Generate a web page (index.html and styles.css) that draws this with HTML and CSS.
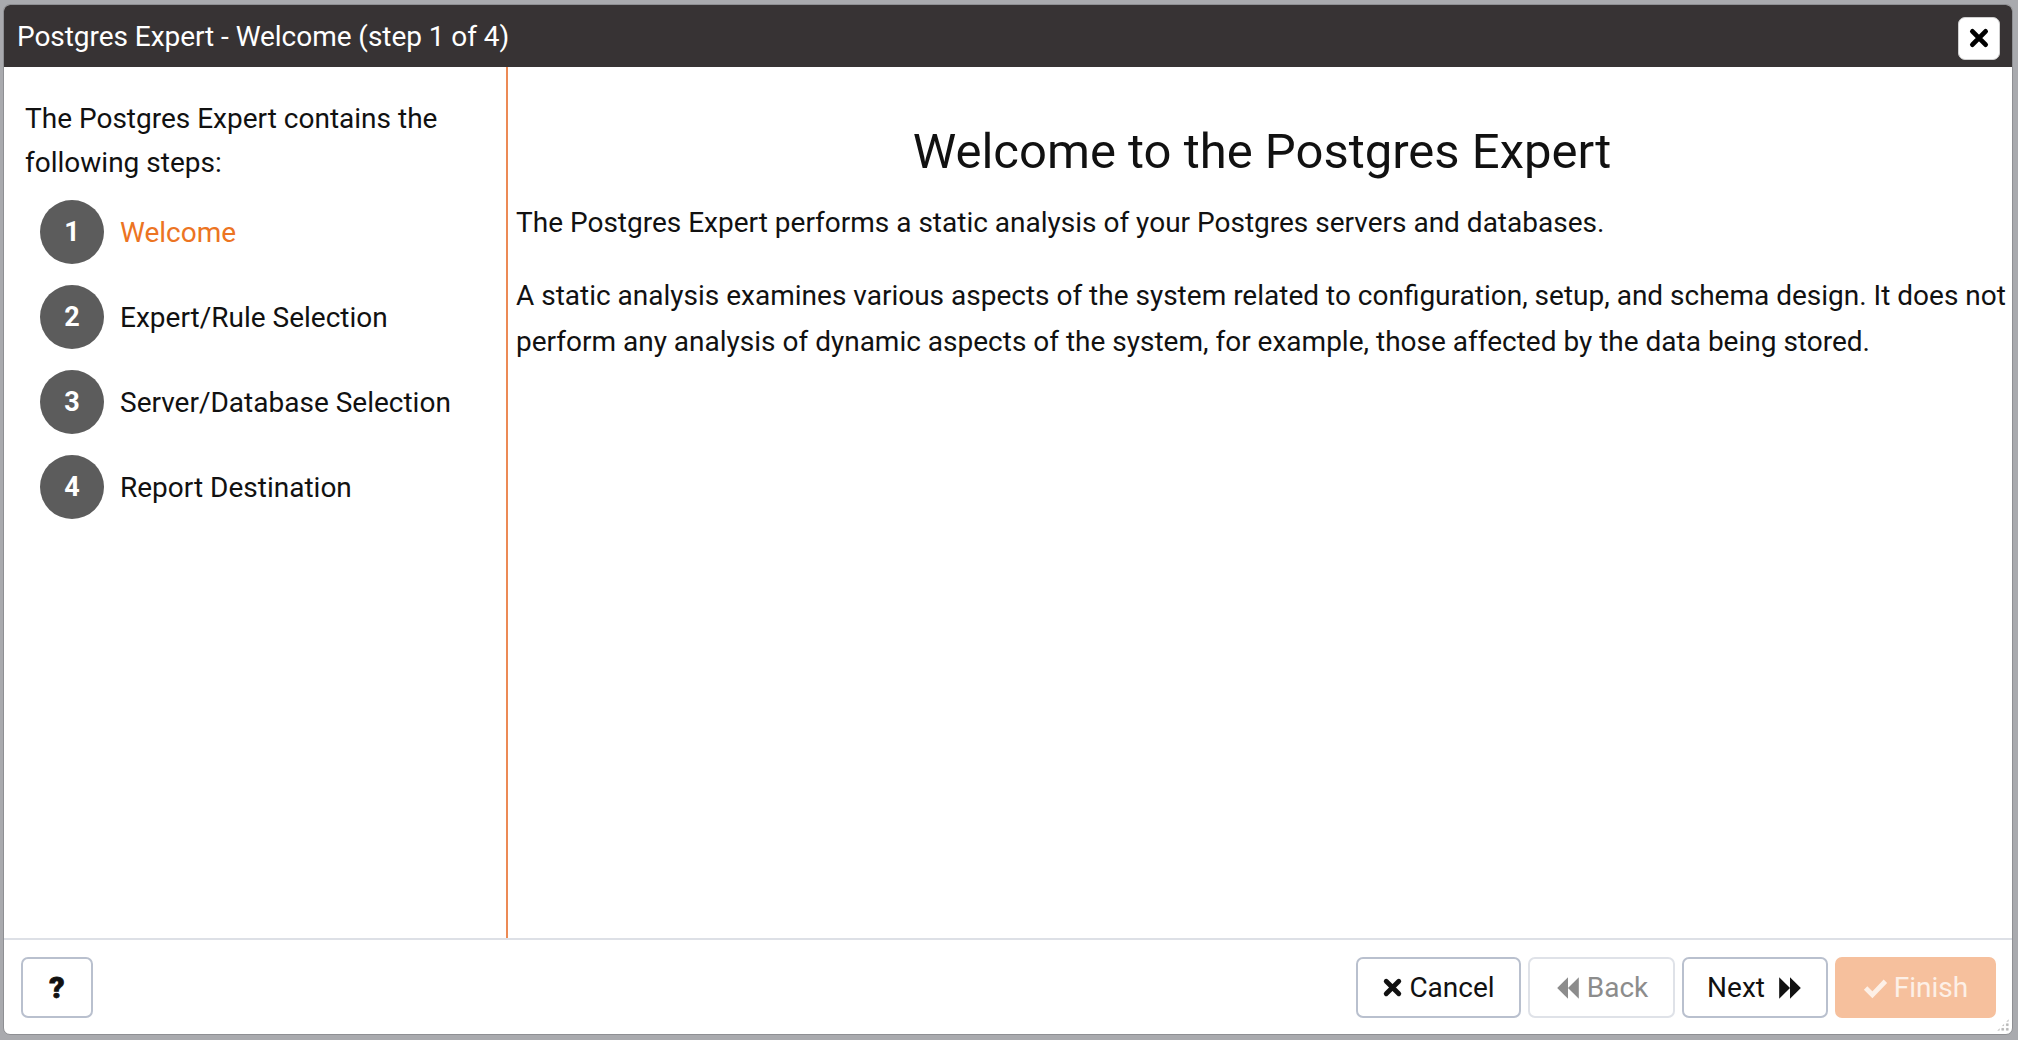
FILE: index.html
```html
<!DOCTYPE html>
<html>
<head>
<meta charset="utf-8">
<link rel="stylesheet" href="styles.css">
</head>
<body>
<div class="dialog">
  <div class="titlebar">
    <div class="title">Postgres Expert - Welcome (step 1 of 4)</div>
    <button class="close" aria-label="Close">
      <svg width="22" height="22" viewBox="0 0 20 20"><path d="M4 4 L16 16 M16 4 L4 16" stroke="#000" stroke-width="4.4" stroke-linecap="round"/></svg>
    </button>
  </div>
  <div class="main">
    <div class="side">
      <p class="intro">The Postgres Expert contains the following steps:</p>
      <ul class="steps">
        <li class="step active"><span class="num">1</span><span class="label">Welcome</span></li>
        <li class="step"><span class="num">2</span><span class="label">Expert/Rule Selection</span></li>
        <li class="step"><span class="num">3</span><span class="label">Server/Database Selection</span></li>
        <li class="step"><span class="num">4</span><span class="label">Report Destination</span></li>
      </ul>
    </div>
    <div class="content">
      <h1>Welcome to the Postgres Expert</h1>
      <p>The Postgres Expert performs a static analysis of your Postgres servers and databases.</p>
      <p>A static analysis examines various aspects of the system related to configuration, setup, and schema design. It does not perform any analysis of dynamic aspects of the system, for example, those affected by the data being stored.</p>
    </div>
  </div>
  <div class="footer">
    <button class="btn help"><span class="q">?</span></button>
    <div class="actions">
      <button class="btn"><svg class="ic" width="21" height="21" viewBox="0 0 20 20"><path d="M4 4 L16 16 M16 4 L4 16" stroke="#111" stroke-width="4.6" stroke-linecap="round"/></svg>Cancel</button>
      <button class="btn disabled"><svg class="ic" width="26" height="26" viewBox="0 0 24 24"><polygon points="12,2 12,22 2,12" fill="#8c8c8c"/><polygon points="22,2 22,22 12,12" fill="#8c8c8c"/></svg>Back</button>
      <button class="btn next">Next<svg class="ic after" width="26" height="26" viewBox="0 0 24 24"><polygon points="2,2 2,22 12,12" fill="#111"/><polygon points="12,2 12,22 22,12" fill="#111"/></svg></button>
      <button class="btn finish"><svg class="ic" width="25" height="23" viewBox="0 0 24 22"><path d="M2.5 11.5 L9 18 L21.5 5" stroke="#fdf0e7" stroke-width="4.6" fill="none" stroke-linejoin="miter"/></svg>Finish</button>
    </div>
    <div class="grip"></div>
  </div>
</div>
</body>
</html>
```

FILE: styles.css
```css
html, body {
  margin: 0;
  padding: 0;
  height: 100%;
}
body {
  background: #a9aaae;
  font-family: Roboto, "Liberation Sans", sans-serif;
  overflow: hidden;
}
.dialog {
  box-sizing: border-box;
  margin: 4px 5px 0 3px;
  height: 1031px;
  background: #fff;
  border-radius: 7px;
  overflow: hidden;
  display: flex;
  flex-direction: column;
  border: 1px solid #8e8f93;
}
.titlebar {
  height: 62px;
  flex: none;
  background: #373334;
  display: flex;
  align-items: center;
  justify-content: space-between;
  padding: 0 12px 0 13px;
}
.title {
  color: #fff;
  font-size: 28px;
  letter-spacing: -0.05px;
}
.close {
  width: 42px;
  height: 43px;
  background: #fff;
  border: 1px solid #cfcfcf;
  border-radius: 7px;
  display: flex;
  align-items: center;
  justify-content: center;
  padding: 0;
  margin-top: 4px;
}
.main {
  flex: 1;
  display: flex;
  min-height: 0;
}
.side {
  width: 504px;
  flex: none;
  border-right: 2px solid #ec8a55;
  padding: 30px 0 0 21px;
  box-sizing: border-box;
}
.intro {
  margin: 0;
  font-size: 28px;
  line-height: 44px;
  color: #111;
  width: 440px;
}
.steps {
  list-style: none;
  margin: 15px 0 0 0;
  padding: 0 0 0 15px;
  display: flex;
  flex-direction: column;
  gap: 21px;
}
.step {
  display: flex;
  align-items: center;
  gap: 16px;
}
.num {
  width: 64px;
  height: 64px;
  border-radius: 50%;
  background: #5c5c5c;
  color: #fff;
  font-weight: 700;
  font-size: 27px;
  display: flex;
  align-items: center;
  justify-content: center;
  flex: none;
}
.label {
  font-size: 28px;
  color: #111;
}
.step.active .label {
  color: #ec7422;
}
.content {
  flex: 1;
  padding: 0 4px 0 8px;
  color: #111;
}
.content h1 {
  text-align: center;
  font-weight: 400;
  font-size: 49px;
  margin: 57px 0 20px 0;
  line-height: 56px;
}
.content p {
  font-size: 28px;
  line-height: 46px;
  margin: 0 0 27px 0;
}
.footer {
  flex: none;
  height: 96px;
  border-top: 2px solid #dde0e6;
  display: flex;
  align-items: flex-start;
  justify-content: space-between;
  padding: 17px 16px 0 17px;
  box-sizing: border-box;
  position: relative;
}
.btn {
  height: 61px;
  box-sizing: border-box;
  background: #fff;
  border: 2px solid #b9c0ce;
  border-radius: 7px;
  font-family: Roboto, "Liberation Sans", sans-serif;
  font-size: 28px;
  color: #111;
  display: flex;
  align-items: center;
  justify-content: center;
  padding: 0;
}
.help {
  width: 72px;
}
.q {
  font-weight: 900;
  font-size: 30px;
  -webkit-text-stroke: 0.8px #111;
}
.actions {
  display: flex;
  gap: 7px;
}
.actions .btn:nth-child(1) { width: 165px; }
.actions .btn:nth-child(2) { width: 147px; }
.actions .btn:nth-child(3) { width: 146px; }
.actions .btn:nth-child(4) { width: 161px; }
.ic {
  margin-right: 6px;
}
.ic.after {
  margin-right: 0;
  margin-left: 12px;
}
.btn.disabled {
  border-color: #dfe2e8;
  color: #8c8c8c;
}
.btn.finish {
  background: #f6c09d;
  border-color: #f6c09d;
  color: #fdf0e7;
}
.grip {
  position: absolute;
  right: 2px;
  bottom: 2px;
  width: 14px;
  height: 14px;
  background-image: radial-gradient(circle, #b8b8b8 1.2px, transparent 1.5px);
  background-size: 4.5px 4.5px;
  clip-path: polygon(100% 0, 100% 100%, 0 100%);
}
```
